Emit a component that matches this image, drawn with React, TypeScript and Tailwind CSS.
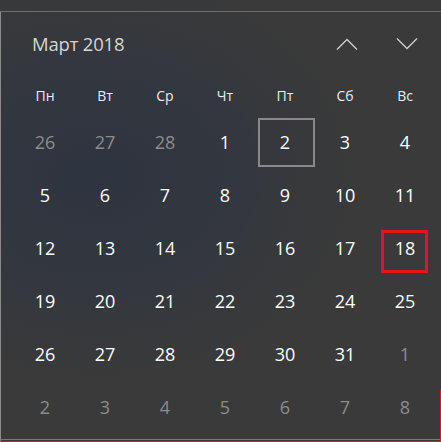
import React from 'react';

const dayNames = ['Пн', 'Вт', 'Ср', 'Чт', 'Пт', 'Сб', 'Вс'];

type Cell = { day: number; current: boolean };

const cells: Cell[] = [
  ...[26, 27, 28].map((d) => ({ day: d, current: false })),
  ...Array.from({ length: 31 }, (_, i) => ({ day: i + 1, current: true })),
  ...Array.from({ length: 8 }, (_, i) => ({ day: i + 1, current: false })),
];

function Chevron({ up }: { up?: boolean }) {
  return (
    <svg width="22" height="12" viewBox="0 0 22 12" fill="none">
      <path
        d={up ? 'M1 11.5L11 1.5L21 11.5' : 'M1 0.5L11 10.5L21 0.5'}
        stroke="#cfcfcf"
        strokeWidth="1.3"
      />
    </svg>
  );
}

export default function App() {
  return (
    <div
      className="relative w-[441px] h-[442px] overflow-hidden bg-[#3a3a3a] text-white"
      style={{ fontFamily: '"Open Sans", "Noto Sans", sans-serif' }}
    >
      <div className="absolute inset-0 bg-[radial-gradient(ellipse_70%_55%_at_22%_40%,#2e3440_0%,#33373e_45%,#3a3a3a_85%)]" />

      <div className="relative flex flex-col h-full">
        {/* top strip */}
        <div className="h-[11px] shrink-0" />
        <div className="h-px shrink-0 bg-[#6c6c6c]" />

        <div className="flex-1 flex flex-col border-l border-[#8a8a8a]">
          {/* month header */}
          <div className="h-[62px] flex items-center pl-[31px] pr-[23px]">
            <span className="text-[18.5px] leading-none text-[#d6d6d6] tracking-[-0.2px] pt-[3px]">Март 2018</span>
            <div className="ml-auto flex items-center gap-[38px] pt-[1px]">
              <Chevron up />
              <Chevron />
            </div>
          </div>

          {/* weekday names */}
          <div className="grid grid-cols-[repeat(7,60px)] pl-[14px] h-[41px] items-center">
            {dayNames.map((d) => (
              <div key={d} className="text-center text-[14px] leading-none text-[#ececec] pt-[2px]">
                {d}
              </div>
            ))}
          </div>

          {/* days */}
          <div className="grid grid-cols-[repeat(7,60px)] grid-rows-[repeat(6,53px)] pl-[14px]">
            {cells.map((c, i) => {
              const isToday = c.current && c.day === 2;
              const isMarked = c.current && c.day === 18;
              return (
                <div key={i} className="relative flex items-center justify-center">
                  {isToday && (
                    <div className="absolute left-[3px] top-[3px] w-[57px] h-[49px] border-2 border-[#898989]" />
                  )}
                  {isMarked && (
                    <div className="absolute left-[6px] top-[9px] w-[47px] h-[43px] border-[3px] border-[#e3131f]" />
                  )}
                  <span
                    className={`relative text-[18px] leading-none ${
                      c.current ? 'text-white' : 'text-[#8c8c8c]'
                    }`}
                  >
                    {c.day}
                  </span>
                </div>
              );
            })}
          </div>

          <div className="flex-1" />
          <div className="h-px bg-[#7a7a7a]" />
          <div className="h-px" />
        </div>
        <div className="h-px shrink-0 bg-[#e3131f]" />
      </div>

      <div className="absolute right-0 top-[390px] bottom-0 w-px bg-[#e3131f]" />
    </div>
  );
}
